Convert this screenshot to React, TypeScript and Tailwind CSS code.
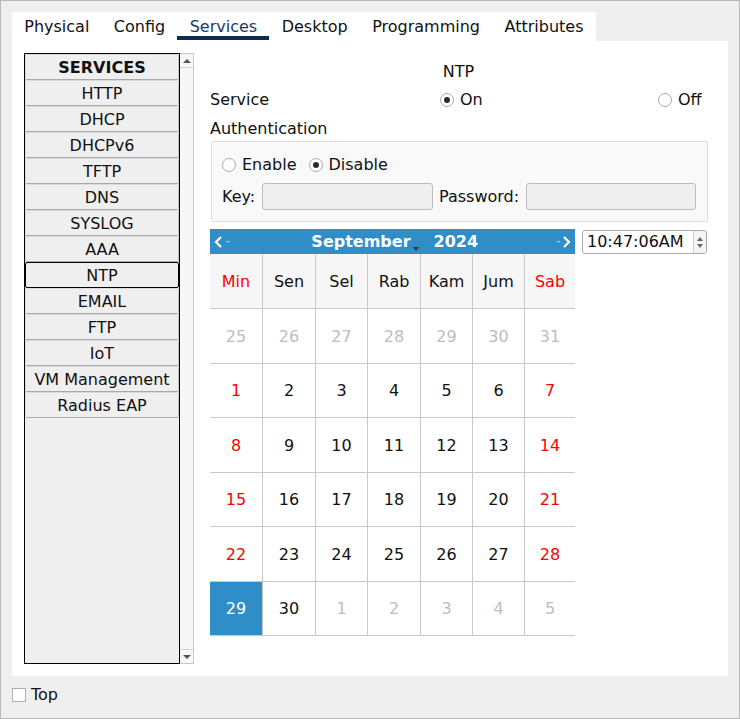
import { useState } from "react";

const tabs = ["Physical", "Config", "Services", "Desktop", "Programming", "Attributes"];

const services = [
  "SERVICES",
  "HTTP",
  "DHCP",
  "DHCPv6",
  "TFTP",
  "DNS",
  "SYSLOG",
  "AAA",
  "NTP",
  "EMAIL",
  "FTP",
  "IoT",
  "VM Management",
  "Radius EAP",
];

const days = ["Min", "Sen", "Sel", "Rab", "Kam", "Jum", "Sab"];

// [day, inMonth]
const weeks: [number, boolean][][] = [
  [[25, false], [26, false], [27, false], [28, false], [29, false], [30, false], [31, false]],
  [[1, true], [2, true], [3, true], [4, true], [5, true], [6, true], [7, true]],
  [[8, true], [9, true], [10, true], [11, true], [12, true], [13, true], [14, true]],
  [[15, true], [16, true], [17, true], [18, true], [19, true], [20, true], [21, true]],
  [[22, true], [23, true], [24, true], [25, true], [26, true], [27, true], [28, true]],
  [[29, true], [30, true], [1, false], [2, false], [3, false], [4, false], [5, false]],
];

function Radio({ checked }: { checked: boolean }) {
  return (
    <span className="w-[14px] h-[14px] rounded-full border border-[#a9a9a9] bg-white flex items-center justify-center">
      {checked && <span className="w-[6px] h-[6px] rounded-full bg-[#2b2b2b]"></span>}
    </span>
  );
}

export default function App() {
  const [service, setService] = useState("on");
  const [auth, setAuth] = useState("disable");
  const [selected, setSelected] = useState("NTP");

  return (
    <div
      className="w-[740px] h-[719px] bg-[#efefef] border border-[#b9b9b9] pt-[11px] px-[11px] text-[16px] text-[#111] overflow-hidden"
      style={{ fontFamily: '"DejaVu Sans", Verdana, sans-serif' }}
    >
      <div className="flex h-[29px]">
        <div className="flex bg-white">
          {tabs.map((t) => (
            <div
              key={t}
              className={`px-[12.25px] h-[29px] flex items-center relative leading-none ${
                t === "Services" ? "text-[#1c3963]" : ""
              }`}
            >
              <span>{t}</span>
              {t === "Services" && (
                <span className="absolute left-0 right-0 bottom-[1px] h-[4px] bg-[#0f2b53]"></span>
              )}
            </div>
          ))}
        </div>
      </div>

      <div className="bg-white w-[716px] h-[635px] p-[12px] flex">
        <div className="flex h-[611px]">
          <div className="w-[156px] h-full border border-black bg-[#efefef] flex flex-col">
            {services.map((s) => (
              <button
                key={s}
                onClick={() => s !== "SERVICES" && setSelected(s)}
                className={`h-[26px] pt-[2px] leading-none w-full flex items-center justify-center rounded-[2px] border ${
                  selected === s
                    ? "border-black"
                    : "border-[#dadada] border-b-[#a9a9a9] border-r-[#c4c4c4] w-[153px]"
                } ${s === "SERVICES" ? "font-bold" : ""}`}
              >
                {s}
              </button>
            ))}
          </div>
          <div className="w-[14px] h-full border border-l-0 border-[#c8c8c8] bg-[#f7f7f7] flex flex-col justify-between">
            <div className="h-[14px] border-b border-[#d6d6d6] flex items-center justify-center">
              <span className="w-0 h-0 border-l-[4px] border-r-[4px] border-b-[4px] border-l-transparent border-r-transparent border-b-[#555]"></span>
            </div>
            <div className="h-[14px] border-t border-[#d6d6d6] flex items-center justify-center">
              <span className="w-0 h-0 border-l-[4px] border-r-[4px] border-t-[4px] border-l-transparent border-r-transparent border-t-[#555]"></span>
            </div>
          </div>
        </div>

        <div className="ml-[16px] w-[497px] flex flex-col">
          <div className="mt-[8px] h-[20px] pt-[2px] flex items-center justify-center leading-none">NTP</div>

          <div className="mt-[6px] h-[24px] pt-[2px] flex items-center leading-none">
            <span className="w-[230px]">Service</span>
            <label className="w-[218px] flex items-center gap-[6px] cursor-pointer" onClick={() => setService("on")}>
              <Radio checked={service === "on"} />
              <span>On</span>
            </label>
            <label className="flex items-center gap-[6px] cursor-pointer" onClick={() => setService("off")}>
              <Radio checked={service === "off"} />
              <span>Off</span>
            </label>
          </div>

          <div className="mt-[5px] h-[24px] pt-[2px] flex items-center leading-none">Authentication</div>

          <div className="mt-[1px] ml-[1px] w-[497px] h-[81px] border border-[#dedede] bg-[#f9f9f9] rounded-[2px] px-[10px] pt-[11px]">
            <div className="h-[22px] pt-[2px] flex items-center leading-none">
              <label className="flex items-center gap-[6px] mr-[12px] cursor-pointer" onClick={() => setAuth("enable")}>
                <Radio checked={auth === "enable"} />
                <span>Enable</span>
              </label>
              <label className="flex items-center gap-[6px] cursor-pointer" onClick={() => setAuth("disable")}>
                <Radio checked={auth === "disable"} />
                <span>Disable</span>
              </label>
            </div>
            <div className="mt-[8px] flex items-center leading-none">
              <span className="w-[40px]">Key:</span>
              <input className="w-[171px] h-[27px] bg-[#efefef] border border-[#bcbcbc] rounded-[3px]" disabled />
              <span className="ml-[6px] w-[87px]">Password:</span>
              <input className="w-[170px] h-[27px] bg-[#efefef] border border-[#bcbcbc] rounded-[3px]" disabled />
            </div>
          </div>

          <div className="mt-[7px] flex items-start">
            <div className="w-[365px]">
              <div className="h-[25px] bg-[#2f8dc8] flex items-center justify-between px-[3px] text-white">
                <span className="flex items-center gap-[2px] leading-none">
                  <svg width="10" height="14" viewBox="0 0 10 14">
                    <path d="M8 2 L3 7 L8 12" stroke="white" strokeWidth="2.2" fill="none" />
                  </svg>
                  <span className="text-[10px] tracking-[-1px] text-[#dfeaf4]">··</span>
                </span>
                <span className="flex items-center font-bold leading-none ml-[82px]">
                  <span>September</span>
                  <span className="ml-[2px] mt-[14px] w-0 h-0 border-l-[3px] border-r-[3px] border-t-[4px] border-l-transparent border-r-transparent border-t-[#2a3b4d]"></span>
                  <span className="ml-[15px]">2024</span>
                </span>
                <span className="flex items-center gap-[2px] leading-none ml-auto">
                  <span className="text-[10px] tracking-[-1px] text-[#dfeaf4]">··</span>
                  <svg width="10" height="14" viewBox="0 0 10 14">
                    <path d="M2 2 L7 7 L2 12" stroke="white" strokeWidth="2.2" fill="none" />
                  </svg>
                </span>
              </div>
              <div className="grid grid-cols-[52px_53px_52px_53px_52px_52px_51px] border-r border-[#c8c8c8]">
                {days.map((d, i) => (
                  <div
                    key={d}
                    className={`h-[55px] pt-[2px] bg-[#f6f6f6] border-b border-[#c8c8c8] flex items-center justify-center ${
                      i === 0 ? "text-[#f00]" : i === 6 ? "text-[#f00] border-l" : "border-l"
                    }`}
                  >
                    {d}
                  </div>
                ))}
                {weeks.map((w, wi) =>
                  w.map(([n, inMonth], i) => {
                    const isSel = inMonth && n === 29 && wi === 5;
                    let color = "";
                    if (!inMonth) color = "text-[#bdbdbd]";
                    else if (isSel) color = "text-white";
                    else if (i === 0 || i === 6) color = "text-[#f00]";
                    return (
                      <div
                        key={`${wi}-${i}`}
                        className={`h-[54.5px] pt-[2px] border-b border-[#c8c8c8] flex items-center justify-center ${
                          i === 0 ? "" : "border-l"
                        } ${isSel ? "bg-[#2f8dc8]" : "bg-white"} ${color}`}
                      >
                        {n}
                      </div>
                    );
                  })
                )}
              </div>
            </div>

            <div className="ml-[7px] mt-[1px] w-[125px] h-[24px] border border-[#ababab] rounded-[3px] bg-white flex">
              <span className="flex-1 pl-[4px] flex items-center leading-none">10:47:06AM</span>
              <div className="w-[13px] border-l border-[#d0d0d0] bg-[#f4f4f4] flex flex-col items-center justify-center gap-[3px] rounded-r-[3px]">
                <span className="w-0 h-0 border-l-[3.5px] border-r-[3.5px] border-b-[4px] border-l-transparent border-r-transparent border-b-[#666]"></span>
                <span className="w-0 h-0 border-l-[3.5px] border-r-[3.5px] border-t-[4px] border-l-transparent border-r-transparent border-t-[#666]"></span>
              </div>
            </div>
          </div>
        </div>
      </div>

      <div className="mt-[11px] flex items-center gap-[5px] leading-none">
        <span className="w-[14px] h-[14px] border border-[#b0b0b0] bg-white"></span>
        <span>Top</span>
      </div>
    </div>
  );
}
